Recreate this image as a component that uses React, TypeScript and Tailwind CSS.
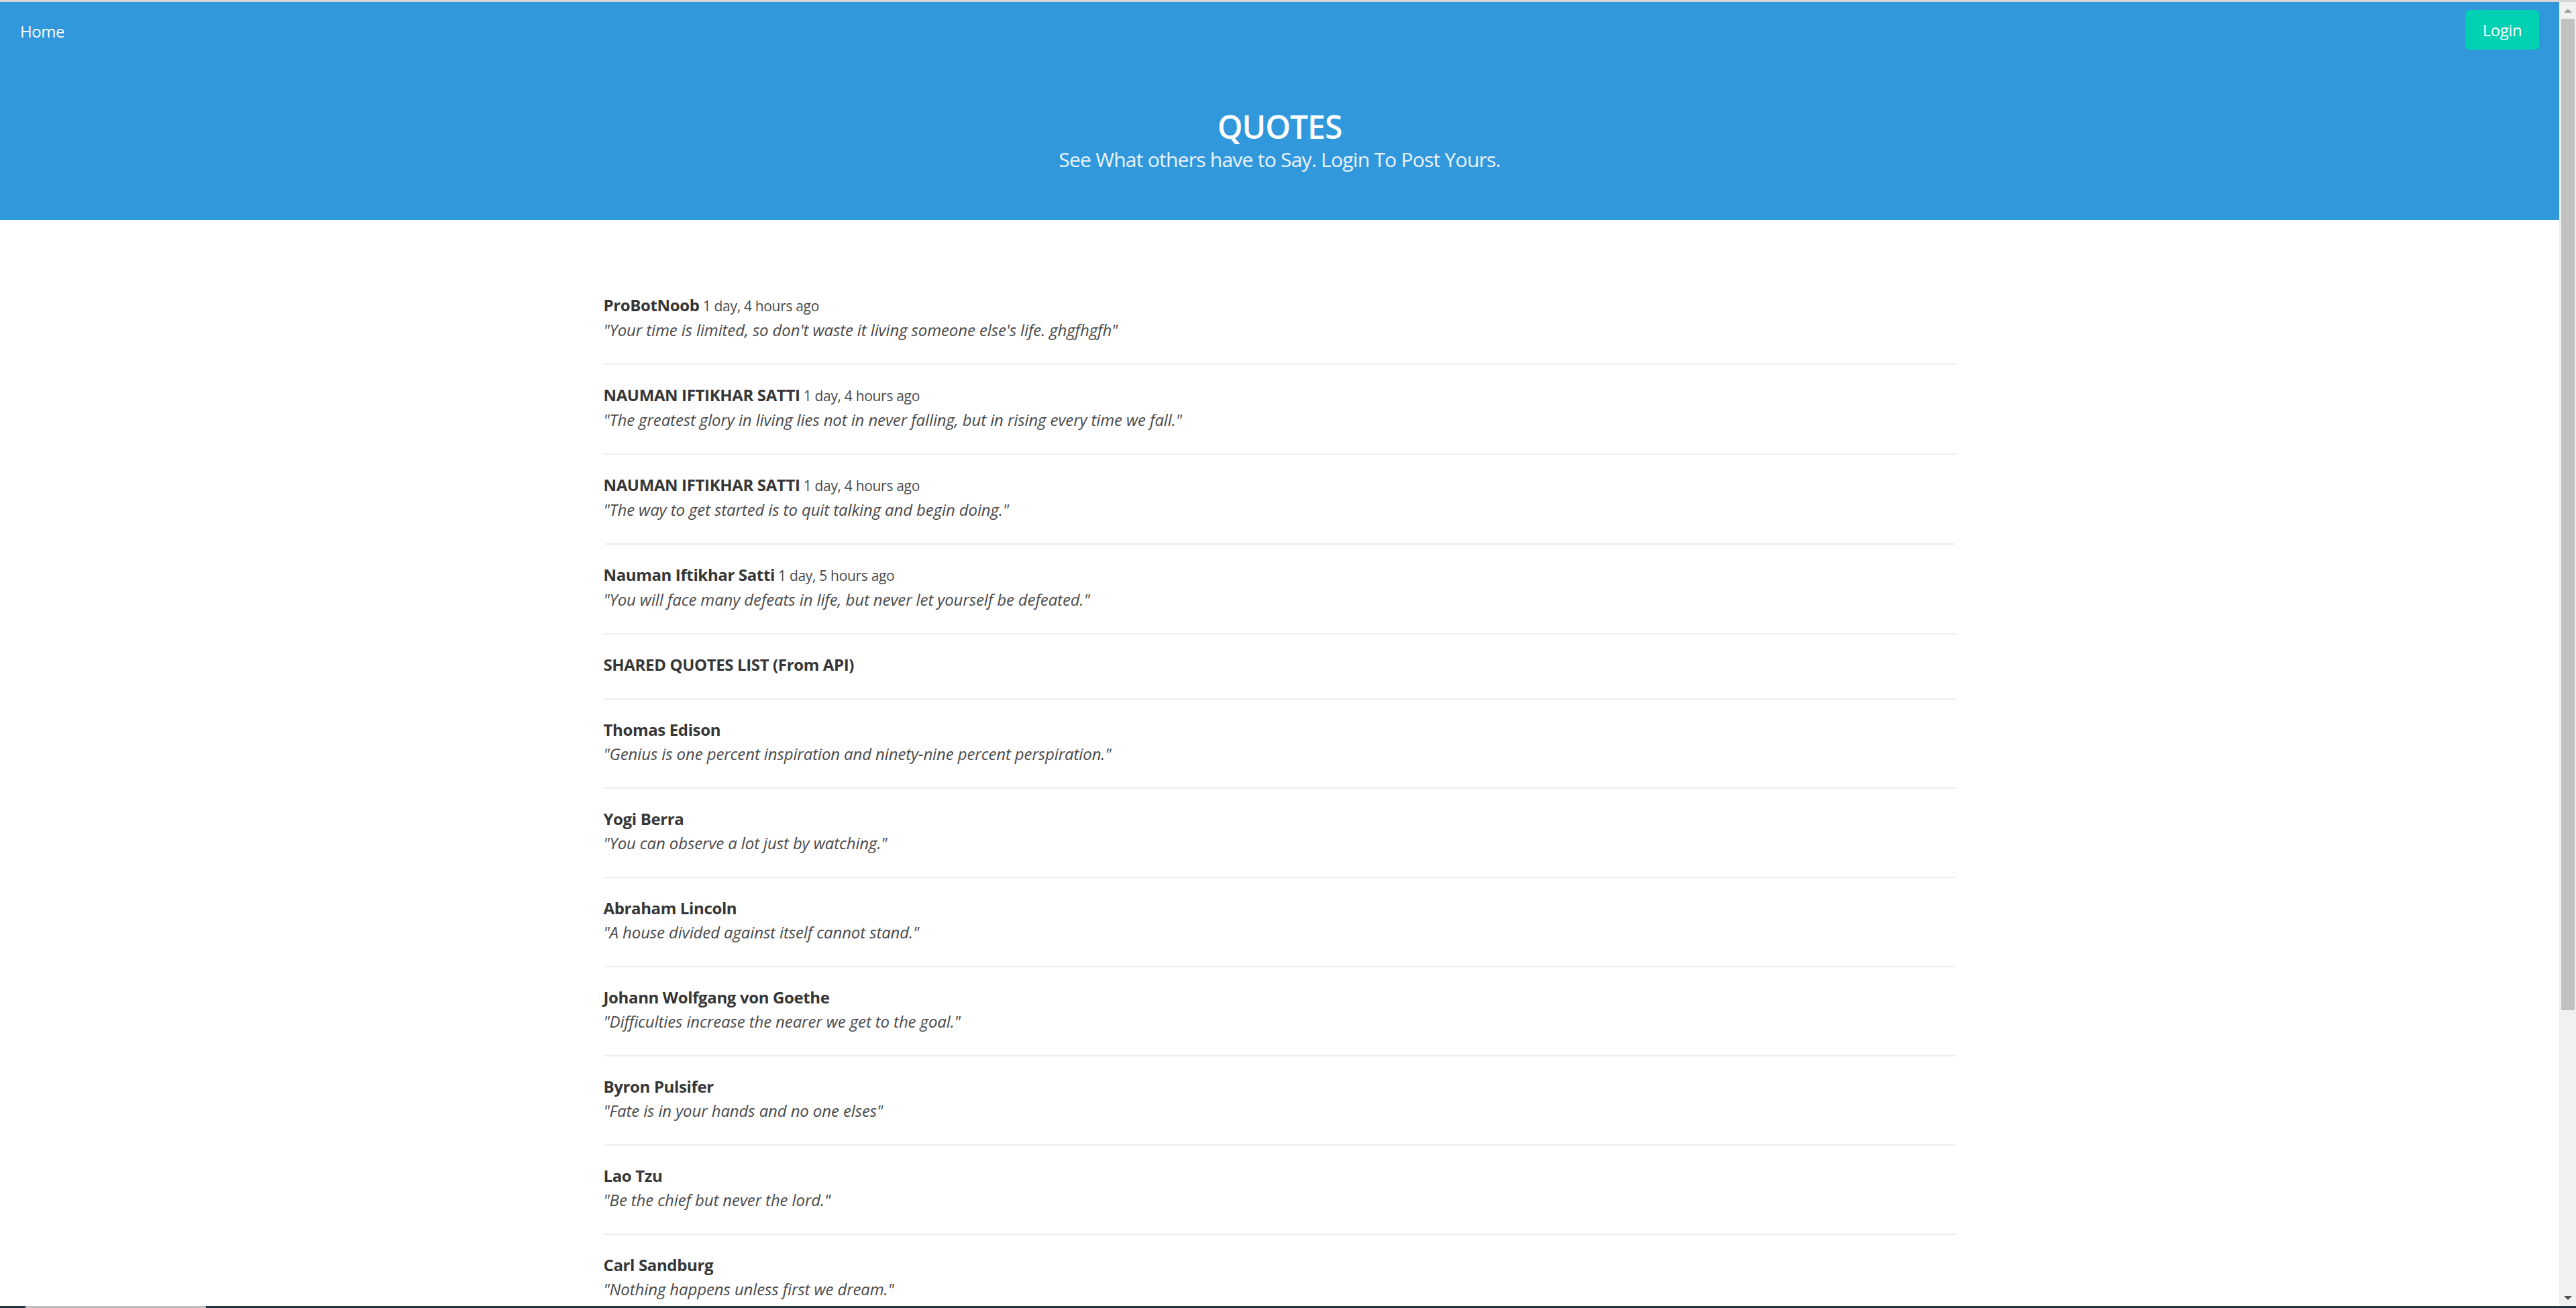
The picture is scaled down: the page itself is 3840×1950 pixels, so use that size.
const font = { fontFamily: '"Open Sans", "Liberation Sans", sans-serif' };

type Quote = { author: string; ago?: string; text?: string };

const quotes: Quote[] = [
  {
    author: "ProBotNoob",
    ago: "1 day, 4 hours ago",
    text: "Your time is limited, so don't waste it living someone else's life. ghgfhgfh",
  },
  {
    author: "NAUMAN IFTIKHAR SATTI",
    ago: "1 day, 4 hours ago",
    text: "The greatest glory in living lies not in never falling, but in rising every time we fall.",
  },
  {
    author: "NAUMAN IFTIKHAR SATTI",
    ago: "1 day, 4 hours ago",
    text: "The way to get started is to quit talking and begin doing.",
  },
  {
    author: "Nauman Iftikhar Satti",
    ago: "1 day, 5 hours ago",
    text: "You will face many defeats in life, but never let yourself be defeated.",
  },
  { author: "SHARED QUOTES LIST (From API)" },
  {
    author: "Thomas Edison",
    text: "Genius is one percent inspiration and ninety-nine percent perspiration.",
  },
  { author: "Yogi Berra", text: "You can observe a lot just by watching." },
  { author: "Abraham Lincoln", text: "A house divided against itself cannot stand." },
  {
    author: "Johann Wolfgang von Goethe",
    text: "Difficulties increase the nearer we get to the goal.",
  },
  { author: "Byron Pulsifer", text: "Fate is in your hands and no one elses" },
  { author: "Lao Tzu", text: "Be the chief but never the lord." },
  { author: "Carl Sandburg", text: "Nothing happens unless first we dream." },
];

const Hero = () => (
  <section className="bg-[#3298dc] text-white">
    <nav className="flex h-[78px] items-center justify-between pl-[30px] pr-[30px]">
      <a className="pt-[10px] text-[24px] leading-[36px] tracking-[-0.02em]">Home</a>
      <button className="mt-[5px] flex h-[59px] w-[110px] items-center justify-center rounded-[6px] bg-[#00d1b2] text-[24px] tracking-[-0.02em] text-white">
        Login
      </button>
    </nav>
    <div className="flex flex-col items-center pb-[72px] pt-[81px] text-center">
      <h1 className="text-[48px] font-semibold leading-[54px] tracking-[-0.02em]">QUOTES</h1>
      <h2 className="mt-[3px] text-[30px] leading-[37px] tracking-[-0.025em] text-white/90">
        See What others have to Say. Login To Post Yours.
      </h2>
    </div>
  </section>
);

const QuoteEntry = ({ quote, first }: { quote: Quote; first: boolean }) => (
  <article
    className={
      first ? "pb-[32px] pt-[27px]" : "border-t-2 border-[#eeeeee] pb-[32px] pt-[27px]"
    }
  >
    <p className="text-[24px] leading-[36px] text-[#4a4a4a]">
      <strong className="font-bold tracking-[-0.015em] text-[#363636]">{quote.author}</strong>
      {quote.ago && <small className="text-[21px] tracking-[-0.015em]"> {quote.ago}</small>}
    </p>
    {quote.text && (
      <p className="text-[24px] italic leading-[36px] tracking-[-0.005em] text-[#4a4a4a]">
        "{quote.text}"
      </p>
    )}
  </article>
);

const Scrollbar = () => (
  <div className="flex w-[25px] shrink-0 flex-col items-center bg-[#f1f1f1]">
    <div className="flex h-[25px] w-full items-center justify-center">
      <div className="h-0 w-0 border-x-[6px] border-b-[6px] border-x-transparent border-b-[#a3a3a3]" />
    </div>
    <div className="h-[1478px] w-[20px] bg-[#c1c1c1]" />
    <div className="flex-1" />
    <div className="flex h-[25px] w-full items-center justify-center">
      <div className="h-0 w-0 border-x-[6px] border-t-[6px] border-x-transparent border-t-[#505050]" />
    </div>
  </div>
);

export default function App() {
  return (
    <div className="flex h-[1950px] flex-col overflow-hidden bg-white" style={font}>
      <div className="h-[3px] shrink-0 bg-[#d6d6d6]" />
      <div className="flex min-h-0 flex-1">
        <main className="min-w-0 flex-1 overflow-hidden">
          <Hero />
          <section className="mx-auto w-[2016px] pt-[82px]">
            {quotes.map((q, i) => (
              <QuoteEntry key={i} quote={q} first={i === 0} />
            ))}
          </section>
        </main>
        <Scrollbar />
      </div>
      <div className="flex h-[3px] shrink-0 bg-[#233540]">
        <div className="w-[38px]" />
        <div className="w-[269px] bg-[#bfbfbf]" />
      </div>
    </div>
  );
}
